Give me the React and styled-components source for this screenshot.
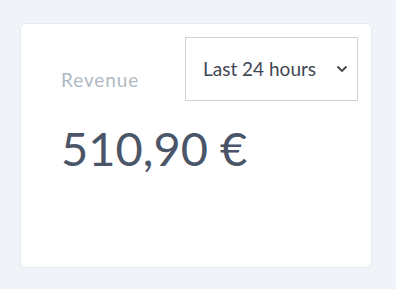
import React from 'react';
import styled, { createGlobalStyle } from 'styled-components';

const Global = createGlobalStyle`
  html, body {
    margin: 0;
    background: #f0f3f8;
    font-family: Lato, "Open Sans", sans-serif;
  }
`

const Page = styled.div`
  padding: 23px 24px 22px 20px;
`

const Card = styled.div`
  background: #fff;
  border: 1px solid #e6eaf0;
  border-radius: 6px;
  height: 245px;
  padding: 13px 13px 0 40px;
  box-sizing: border-box;
`

const Header = styled.div`
  display: flex;
  justify-content: space-between;
  align-items: flex-start;
`

const Label = styled.div`
  margin-top: 31px;
  font-size: 19px;
  color: #b1b9c2;
  letter-spacing: 0.9px;
`

const Select = styled.div`
  width: 173px;
  height: 64px;
  box-sizing: border-box;
  border: 1px solid #cdd2d9;
  display: flex;
  align-items: center;
  justify-content: space-between;
  padding: 0 9px 1px 17px;
  font-size: 19px;
  color: #3f4754;
`

const Amount = styled.div`
  margin-top: 19px;
  font-size: 47px;
  color: #4a5567;
`

const Chevron = () => (
  <svg width="12" height="8" viewBox="0 0 12 8">
    <path d="M1.5 1.5 L6 6 L10.5 1.5" fill="none" stroke="#444" strokeWidth="1.8" />
  </svg>
)

export default function App() {
  return (
    <>
      <Global />
      <Page>
        <Card>
          <Header>
            <Label>Revenue</Label>
            <Select>
              <span>Last 24 hours</span>
              <Chevron />
            </Select>
          </Header>
          <Amount>510,90 €</Amount>
        </Card>
      </Page>
    </>
  );
}
